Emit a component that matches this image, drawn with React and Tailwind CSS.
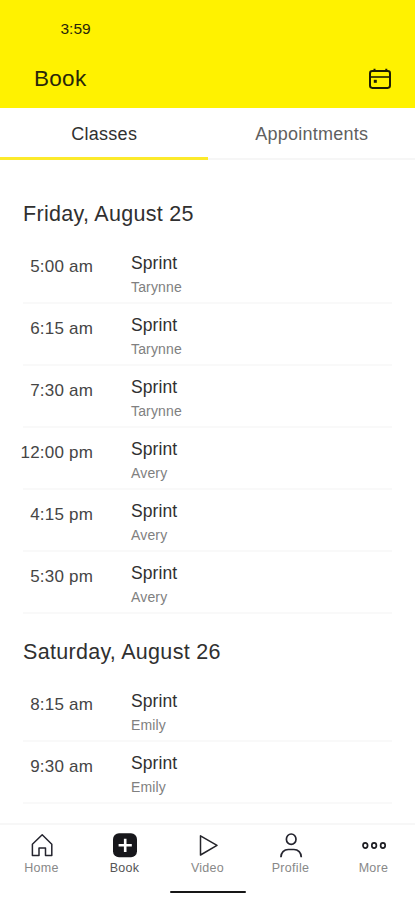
const days = [
  {
    label: "Friday, August 25",
    classes: [
      ["5:00 am", "Sprint", "Tarynne"],
      ["6:15 am", "Sprint", "Tarynne"],
      ["7:30 am", "Sprint", "Tarynne"],
      ["12:00 pm", "Sprint", "Avery"],
      ["4:15 pm", "Sprint", "Avery"],
      ["5:30 pm", "Sprint", "Avery"],
    ],
  },
  {
    label: "Saturday, August 26",
    classes: [
      ["8:15 am", "Sprint", "Emily"],
      ["9:30 am", "Sprint", "Emily"],
    ],
  },
];

function CalendarIcon() {
  return (
    <svg width="24" height="22" viewBox="0 0 24 22" fill="none" stroke="#1d1d05" strokeWidth="2">
      <rect x="2" y="3.1" width="20" height="16.8" rx="2.3" />
      <path d="M2 9h20" strokeWidth="1.6" />
      <path d="M6.5 0.8v3M18.3 0.8v3" />
      <rect x="5.8" y="11.8" width="3" height="3" fill="#1d1d05" stroke="none" />
    </svg>
  );
}

function HomeIcon() {
  return (
    <svg width="26" height="26" viewBox="0 0 26 26" fill="none" stroke="#24242e" strokeWidth="1.5" strokeLinejoin="round">
      <path d="M3.4 12.2 13.2 2.8l9.6 9.4v11.200h-6.3v-7.3H10v7.3H3.4z" />
    </svg>
  );
}

function BookIcon() {
  return (
    <svg width="26" height="26" viewBox="0 0 26 26">
      <rect x="1" y="1.3" width="24" height="24" rx="6" fill="#17171b" />
      <path d="M13.2 6.7v13.2M6.6 13.3h13.2" stroke="#fff" strokeWidth="2.6" />
    </svg>
  );
}

function VideoIcon() {
  return (
    <svg width="26" height="26" viewBox="0 0 26 26" fill="none" stroke="#24242a" strokeWidth="1.5" strokeLinejoin="round">
      <path d="M5.5 3.8 22 13.4 5.5 23z" />
    </svg>
  );
}

function ProfileIcon() {
  return (
    <svg width="26" height="26" viewBox="0 0 26 26" fill="none" stroke="#24242e" strokeWidth="1.7">
      <ellipse cx="13.2" cy="7.2" rx="4.8" ry="5.2" />
      <path d="M2.9 25.300c0-4.8 3.2-7.8 7.4-7.8h5.6c4.2 0 7.4 3 7.4 7.8" />
    </svg>
  );
}

function MoreIcon() {
  return (
    <svg width="26" height="26" viewBox="0 0 26 26" fill="none" stroke="#1d1d22" strokeWidth="1.7">
      <ellipse cx="4.3" cy="13.5" rx="2.3" ry="2.6" />
      <ellipse cx="13.1" cy="13.5" rx="2.3" ry="2.6" />
      <ellipse cx="21.9" cy="13.5" rx="2.3" ry="2.6" />
    </svg>
  );
}

const nav = [
  ["Home", HomeIcon],
  ["Book", BookIcon],
  ["Video", VideoIcon],
  ["Profile", ProfileIcon],
  ["More", MoreIcon],
];

export default function App() {
  return (
    <div className="flex h-[900px] w-full flex-col overflow-hidden bg-white font-['Liberation_Sans',Arial,sans-serif] text-[#303030]">
      <header className="h-[108px] shrink-0 bg-[#fff200] pt-[19px] text-[#29270a]">
        <div className="pl-[60.5px] text-[15.5px] leading-5">3:59</div>
        <div className="mt-[26px] flex h-7 items-center justify-between pr-[23px] pl-[34px]">
          <h1 className="text-[22.5px] leading-7 tracking-[0.3px]">Book</h1>
          <CalendarIcon />
        </div>
      </header>

      <div className="flex h-[52px] shrink-0 text-center text-[18px] leading-[52px] tracking-[0.25px]">
        <div className="w-1/2 border-b-[3px] border-[#fcea2b] pl-px">Classes</div>
        <div className="w-1/2 border-b-2 border-[#f6f6f6] pl-px text-[#606060]">Appointments</div>
      </div>

      <main className="flex-1 overflow-hidden px-[23px] pt-4">
        {days.map((day) => (
          <section key={day.label} className="pt-6">
            <h2 className="mb-[14px] h-7 text-[21.5px] leading-7 tracking-[0.3px]">{day.label}</h2>
            {day.classes.map(([time, name, coach]) => (
              <div key={time} className="flex h-[62px] border-b-2 border-[#f9f9f9]">
                <div className="-ml-[13px] w-[83px] pt-[15px] text-right text-[17px] leading-5 tracking-[0.2px] whitespace-nowrap text-[#454545]">
                  {time}
                </div>
                <div className="pt-[11px] pl-[38px]">
                  <div className="text-[17.5px] leading-5 tracking-[0.1px]">{name}</div>
                  <div className="mt-1.5 text-[14px] leading-4 tracking-[0.15px] text-[#808080]">{coach}</div>
                </div>
              </div>
            ))}
          </section>
        ))}
      </main>

      <footer className="flex h-[77px] shrink-0 flex-col items-center border-t-2 border-[#f7f7f7]">
        <nav className="flex w-full pt-[7px]">
          {nav.map(([label, Icon]) => (
            <div key={label} className="flex flex-1 flex-col items-center">
              <Icon />
              <span className={`mt-0.5 text-[12.5px] leading-4 tracking-[0.3px] ${label === "Book" ? "text-[#555555]" : "text-[#888888]"}`}>
                {label}
              </span>
            </div>
          ))}
        </nav>
        <div className="mt-[15px] h-0.5 w-[76px] shrink-0 rounded-full bg-[#161616]" />
      </footer>
    </div>
  );
}
